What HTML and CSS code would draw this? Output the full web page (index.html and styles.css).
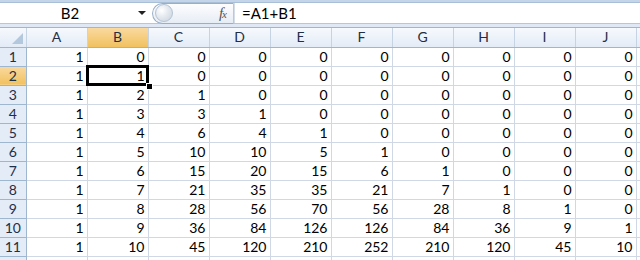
FILE: index.html
```html
<!DOCTYPE html>
<html lang="en">
  <head>
    <meta charset="UTF-8" />
    <title>Book1 - Pascal</title>
    <link rel="stylesheet" href="styles.css">
  </head>
  <body>
    <!-- Formula bar -->
    <div class="ribbon-edge"></div>
    <div class="formula-bar">
      <div class="name-box">
        <span class="cell-ref">B2</span>
        <span class="drop-arrow"></span>
      </div>
      <div class="fx-pill">
        <span class="knob"></span>
        <span class="fx">f<i>x</i></span>
      </div>
      <div class="formula">=A1+B1</div>
    </div>
    <div class="bar-gap"></div>

    <!-- Sheet grid -->
    <table class="sheet">
      <colgroup>
        <col class="c-head" />
        <col /><col /><col /><col /><col /><col /><col /><col /><col /><col /><col class="c-rest" />
      </colgroup>
      <thead>
        <tr>
          <th class="corner"><span class="corner-tri"></span></th>
          <th>A</th><th class="sel">B</th><th>C</th><th>D</th><th>E</th>
          <th>F</th><th>G</th><th>H</th><th>I</th><th>J</th><th></th>
        </tr>
      </thead>
      <tbody>
        <tr><th>1</th><td>1</td><td>0</td><td>0</td><td>0</td><td>0</td><td>0</td><td>0</td><td>0</td><td>0</td><td>0</td><td></td></tr>
        <tr><th class="sel">2</th><td>1</td><td class="active">1<span class="handle"></span></td><td>0</td><td>0</td><td>0</td><td>0</td><td>0</td><td>0</td><td>0</td><td>0</td><td></td></tr>
        <tr><th>3</th><td>1</td><td>2</td><td>1</td><td>0</td><td>0</td><td>0</td><td>0</td><td>0</td><td>0</td><td>0</td><td></td></tr>
        <tr><th>4</th><td>1</td><td>3</td><td>3</td><td>1</td><td>0</td><td>0</td><td>0</td><td>0</td><td>0</td><td>0</td><td></td></tr>
        <tr><th>5</th><td>1</td><td>4</td><td>6</td><td>4</td><td>1</td><td>0</td><td>0</td><td>0</td><td>0</td><td>0</td><td></td></tr>
        <tr><th>6</th><td>1</td><td>5</td><td>10</td><td>10</td><td>5</td><td>1</td><td>0</td><td>0</td><td>0</td><td>0</td><td></td></tr>
        <tr><th>7</th><td>1</td><td>6</td><td>15</td><td>20</td><td>15</td><td>6</td><td>1</td><td>0</td><td>0</td><td>0</td><td></td></tr>
        <tr><th>8</th><td>1</td><td>7</td><td>21</td><td>35</td><td>35</td><td>21</td><td>7</td><td>1</td><td>0</td><td>0</td><td></td></tr>
        <tr><th>9</th><td>1</td><td>8</td><td>28</td><td>56</td><td>70</td><td>56</td><td>28</td><td>8</td><td>1</td><td>0</td><td></td></tr>
        <tr><th>10</th><td>1</td><td>9</td><td>36</td><td>84</td><td>126</td><td>126</td><td>84</td><td>36</td><td>9</td><td>1</td><td></td></tr>
        <tr><th>11</th><td>1</td><td>10</td><td>45</td><td>120</td><td>210</td><td>252</td><td>210</td><td>120</td><td>45</td><td>10</td><td></td></tr>
        <tr class="peek"><th></th><td></td><td></td><td></td><td></td><td></td><td></td><td></td><td></td><td></td><td></td><td></td></tr>
      </tbody>
    </table>
  </body>
</html>
```

FILE: styles.css
```css
/* Reset & Base */
* {
  box-sizing: border-box;
  margin: 0;
  padding: 0;
}
html,
body {
  width: 640px;
  height: 260px;
  overflow: hidden;
  background: #fff;
  font-family: Lato, "Liberation Sans", sans-serif;
  font-size: 14px;
  color: #000;
}
/* Formula bar */
.ribbon-edge {
  height: 3px;
  background: #c4d5ea;
  border-bottom: 1px solid #a9bfd6;
}
.formula-bar {
  display: flex;
  align-items: center;
  height: 21px;
  background: #fff;
  border-bottom: 1px solid #b6c7da;
  font-size: 15px;
}
.name-box {
  width: 152px;
  display: flex;
  align-items: center;
  height: 100%;
}
.cell-ref {
  flex: 1;
  text-align: center;
  padding-left: 2px;
}
.drop-arrow {
  width: 0;
  height: 0;
  border-left: 4px solid transparent;
  border-right: 4px solid transparent;
  border-top: 4px solid #222;
  margin-right: 6px;
}
.fx-pill {
  width: 82px;
  height: 21px;
  display: flex;
  align-items: center;
  justify-content: space-between;
  border: 1px solid #9aaecb;
  border-right: 1px solid #b9c9dc;
  border-radius: 11px 0 0 11px;
  background: linear-gradient(#fdfdfe, #e7edf5);
  padding: 0 7px 0 2px;
}
.knob {
  width: 18px;
  height: 18px;
  border-radius: 50%;
  border: 1px solid #b4c2d3;
  background: radial-gradient(circle at 35% 35%, #fff 0, #e4e9ef 45%, #c8d1dc 100%);
}
.fx {
  font-family: "Liberation Serif", serif;
  font-style: italic;
  font-size: 15px;
  color: #555;
  letter-spacing: -1px;
}
.fx i {
  font-size: 11px;
}
.formula {
  flex: 1;
  padding-left: 7px;
  height: 100%;
  line-height: 21px;
  border-left: 1px solid #d5dde8;
}
.bar-gap {
  height: 4px;
  background: #dfe8f4;
  border-bottom: 1px solid #9eb6ce;
}
/* Sheet grid */
.sheet {
  border-collapse: collapse;
  table-layout: fixed;
  width: 640px;
}
.sheet col {
  width: 61px;
}
.sheet col.c-head {
  width: 26px;
}
.sheet col.c-rest {
  width: 4px;
}
.sheet th,
.sheet td {
  height: 19px;
  padding: 0 3px;
  line-height: 18px;
  white-space: nowrap;
  overflow: visible;
}
.sheet td {
  text-align: right;
  border-right: 1px solid #d0d7e5;
  border-bottom: 1px solid #d0d7e5;
}
.sheet th {
  font-weight: normal;
  color: #1f2f47;
  text-align: center;
  border-right: 1px solid #9eb6ce;
  border-bottom: 1px solid #9eb6ce;
}
.sheet thead th {
  height: 19px;
  background: linear-gradient(#f6f9fd, #e3ebf6);
  border-right: 1px solid #c5d3e3;
  border-bottom: 1px solid #9eb6ce;
}
.sheet tbody th {
  background: #e4ecf7;
  border-bottom: 1px solid #9eb6ce;
}
.sheet thead th.sel,
.sheet tbody th.sel {
  background: linear-gradient(#f9d99f, #f1c15f);
  border-bottom-color: #f2a43a;
}
.corner {
  position: relative;
}
.corner-tri {
  position: absolute;
  right: 3px;
  bottom: 3px;
  width: 0;
  height: 0;
  border-left: 11px solid transparent;
  border-bottom: 11px solid #b4c8dd;
}
/* Active cell */
.sheet td.active {
  position: relative;
  outline: 3px solid #000;
  outline-offset: -2px;
}
.handle {
  position: absolute;
  right: -5px;
  bottom: -5px;
  width: 7px;
  height: 7px;
  background: #000;
  border: 1px solid #fff;
}
```
